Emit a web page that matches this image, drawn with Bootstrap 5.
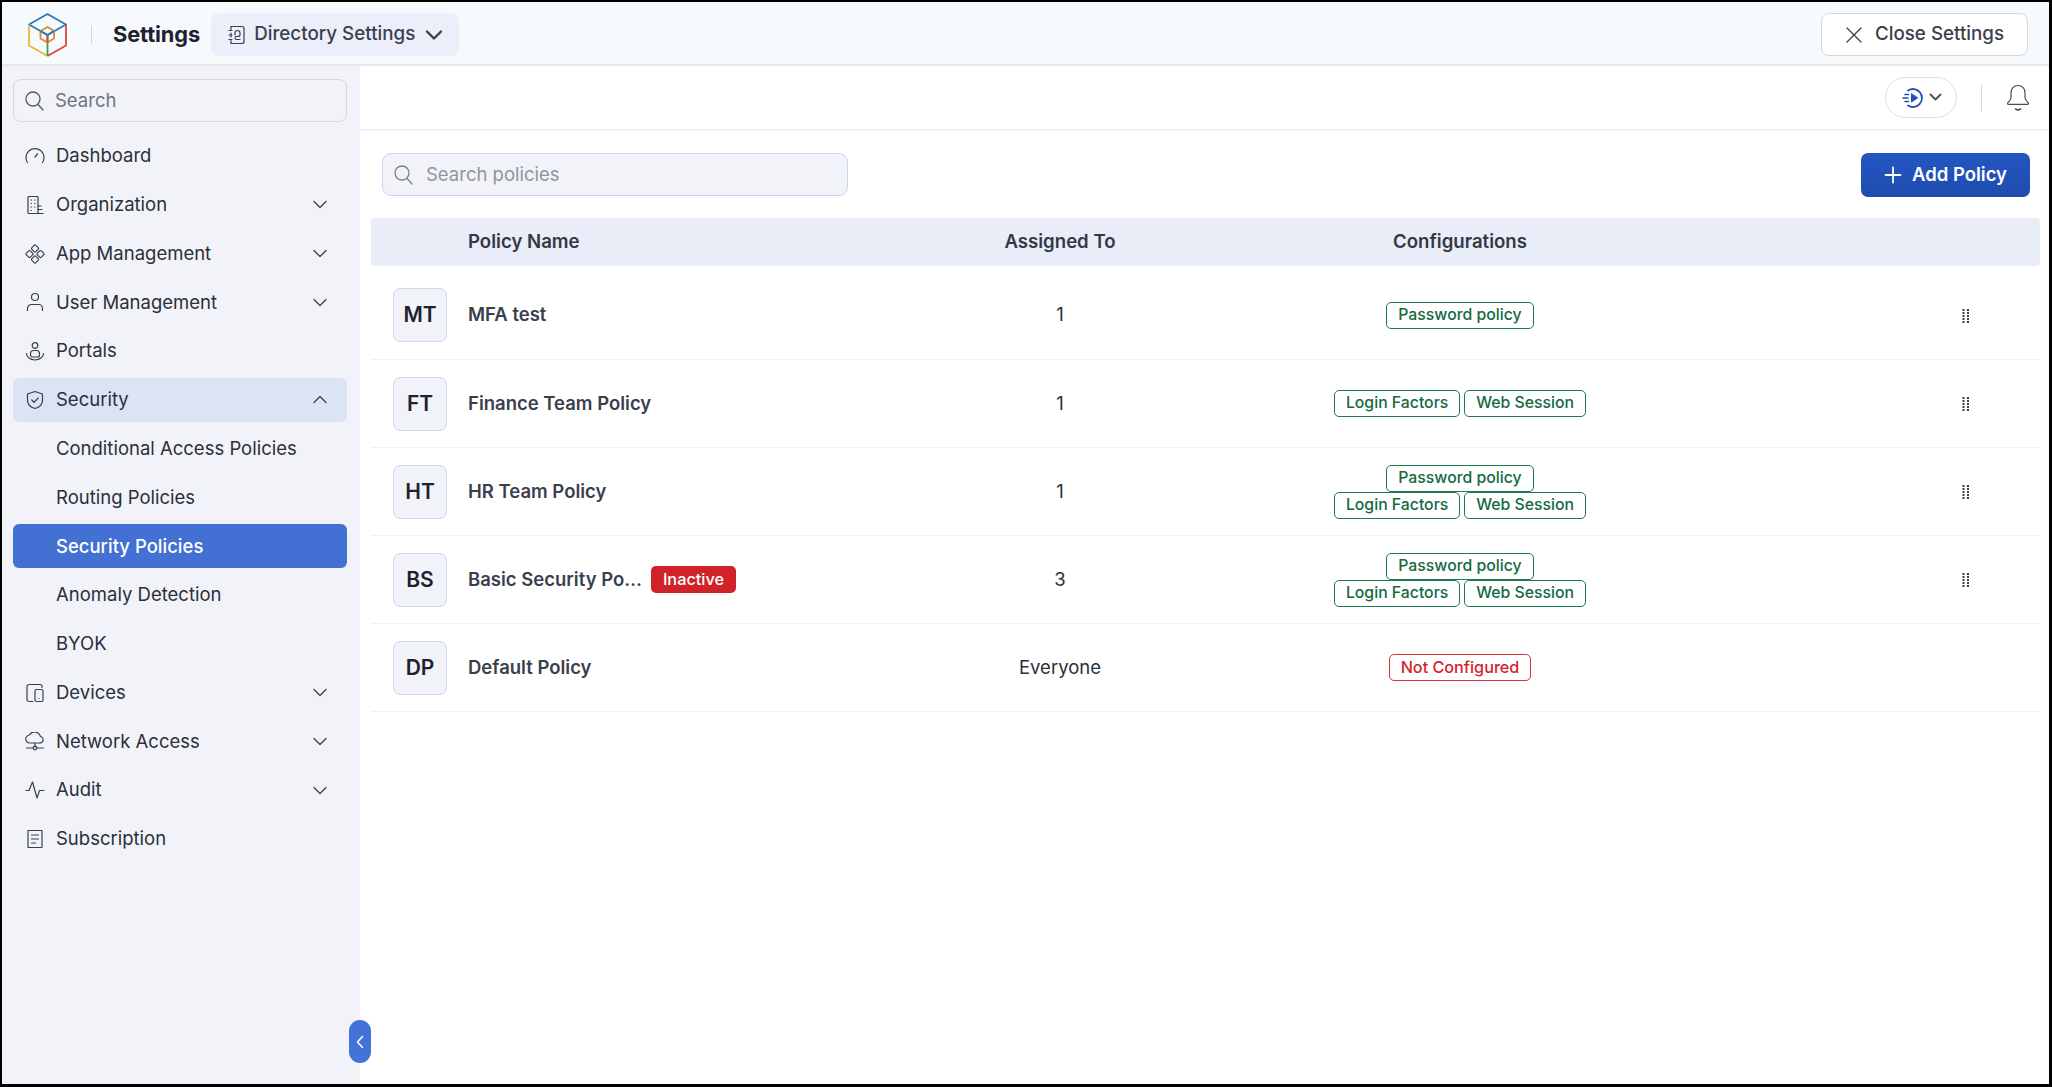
<!DOCTYPE html>
<html lang="en">
  <head>
    <meta charset="UTF-8" />
    <meta name="viewport" content="width=device-width, initial-scale=1.0" />
    <title>Security Policies</title>
    <link href="https://cdn.jsdelivr.net/npm/bootstrap@5.3.2/dist/css/bootstrap.min.css" rel="stylesheet" />
    <style>
      html, body { height: 100%; }
      body {
        font-family: Inter, "Noto Sans", sans-serif;
        color: #2b2f3a;
        background: #fff;
        overflow: hidden;
      }
      svg { flex: none; display: block; }
      .app-shell {
        position: relative;
        width: 2052px;
        height: 1087px;
        border: solid #000;
        border-width: 2px 3px 3px 2px;
        display: flex;
        flex-direction: column;
      }
      /* header */
      .top-head {
        height: 64px;
        flex: none;
        background: #f7fafd;
        border-bottom: 2px solid #e6e8ec;
        padding: 11px 21px 0 26px;
      }
      .head-rule { width: 1px; height: 18px; background: #d5d7dc; margin: 0 21px 0 24px; }
      .head-title { font-size: 21.8px; font-weight: 700; color: #1e2230; letter-spacing: -.1px; }
      .dir-pill {
        height: 43px;
        width: 248px;
        margin-left: 11px;
        background: #eceff9;
        border-radius: 8px;
        padding-left: 16px;
        font-size: 18.8px;
        font-weight: 500;
        color: #3a3f4d;
      }
      .dir-pill .dir-chev { margin-left: 10px; }
      .close-btn {
        height: 43px;
        width: 207px;
        background: #fff;
        border: 1px solid #d5d7dc;
        border-radius: 8px;
        font-size: 18.8px;
        font-weight: 500;
        color: #3a3f4d;
      }
      /* sidebar */
      .side-col {
        width: 358px;
        flex: none;
        background: #f1f3f9;
        padding: 13px 13px 0 11px;
      }
      .side-search {
        height: 43px;
        background: #f1f3f9;
        border: 1.5px solid #d6d8de;
        border-radius: 8px;
        padding-left: 11px;
        margin-bottom: 12px;
      }
      .side-search input, .pol-search input {
        border: 0;
        outline: 0;
        background: transparent;
        font-size: 18.5px;
        width: 100%;
        padding: 0;
        margin-left: 11px;
      }
      .side-search input::placeholder { color: #6d7280; opacity: 1; }
      .pol-search input::placeholder { color: #8f94a1; opacity: 1; }
      .side-menu { display: flex; flex-direction: column; gap: 4.8px; }
      .side-item {
        height: 44px;
        display: flex;
        align-items: center;
        gap: 11px;
        padding: 0 20px 0 12px;
        border-radius: 6px;
        font-size: 18.5px;
        color: #2b2f3a;
        text-decoration: none;
      }
      .side-item.sub { padding-left: 43px; }
      .side-item.open { background: #dbe3f4; }
      .side-item.current { background: #4270d3; color: #fff; font-weight: 500; }
      .side-item .chev { margin-left: auto; }
      /* main */
      .util-bar {
        height: 65px;
        flex: none;
        border-bottom: 2px solid #f0f1f4;
        padding-right: 19px;
      }
      .play-pill {
        width: 72px;
        height: 41px;
        border: 1px solid #dcdee3;
        border-radius: 21px;
      }
      .util-rule { width: 1px; height: 27px; background: #d5d7dc; margin: 0 24px 0 24px; }
      .tool-row { padding: 22px 19px 0 22px; height: 87px; flex: none; }
      .pol-search {
        width: 466px;
        height: 43px;
        background: #f1f3f9;
        border: 1.5px solid #c9d4ee;
        border-radius: 9px;
        padding-left: 11px;
      }
      .pol-search input { margin-left: 13px; }
      .add-btn {
        width: 169px;
        height: 44px;
        border: 0;
        border-radius: 7px;
        background: linear-gradient(#2456c2, #1f4cae);
        color: #fff;
        font-size: 18.5px;
        font-weight: 600;
        padding: 0;
      }
      .add-btn svg { margin-right: 10px; }
      .pol-table {
        width: 1669px;
        margin-left: 11px;
        table-layout: fixed;
        border-collapse: separate;
        border-spacing: 0;
      }
      .pol-table th {
        height: 48px;
        background: #e9edf8;
        font-size: 18.6px;
        font-weight: 600;
        color: #343846;
        padding: 0;
        vertical-align: middle;
      }
      .pol-table th:first-child { border-radius: 4px 0 0 4px; }
      .pol-table th:last-child { border-radius: 0 4px 4px 0; }
      .pol-table td {
        height: 88px;
        padding: 0;
        border-bottom: 1.5px solid #eef0f3;
        vertical-align: middle;
        font-size: 18.5px;
      }
      .row-first td { height: 94px; padding-top: 5px; }
      .avatar-box {
        width: 54px;
        height: 54px;
        margin-left: 22px;
        background: #f1f3f9;
        border: 1.5px solid #cdd8f0;
        border-radius: 7px;
        font-size: 21px;
        font-weight: 600;
        color: #1e2230;
      }
      .pol-name { font-weight: 600; color: #3a3f4d; }
      .state-tag {
        background: #cf2229;
        color: #fff;
        font-size: 16.3px;
        font-weight: 500;
        height: 27px;
        line-height: 27px;
        padding: 0 12px;
        border-radius: 5px;
        margin-left: 9px;
      }
      .tag-wrap { display: flex; flex-wrap: wrap; justify-content: center; column-gap: 4px; }
      .cfg-tag {
        height: 27px;
        line-height: 24px;
        padding: 0 11px;
        border: 1.5px solid #1e7a4f;
        border-radius: 5px;
        font-size: 15.8px;
        font-weight: 500;
        color: #14693f;
        white-space: nowrap;
      }
      .cfg-tag.none { border-color: #d3343b; color: #d3242c; font-size: 16.2px; }
      .line-break { flex-basis: 100%; height: 0; }
      .grip { margin-left: 302px; }
      .collapse-tab {
        position: absolute;
        left: 347px;
        top: 1018px;
        width: 22px;
        height: 43px;
        background: #4472d6;
        border-radius: 11px;
      }
    </style>
  </head>
  <body>
    <div class="app-shell">
      <!-- Header -->
      <header class="top-head d-flex align-items-start">
        <div class="d-flex align-items-center" style="height:43px">
          <svg width="39" height="44" viewBox="0 0 39 44" fill="none" stroke-width="1.8" stroke-linejoin="round">
            <path d="M19.5 1 38 11.5 19.5 22 1 11.5Z" stroke="#2a78b5" />
            <path d="M1 11.5V32.5L19.5 43" stroke="#eeb53a" />
            <path d="M38 11.5V32.5L19.5 43" stroke="#d9453d" />
            <path d="M19.5 22V43" stroke="#3c9a57" />
            <path d="M19.5 14 26 18V25.5L19.5 29.5 12.5 25.5V18Z" stroke="#d98a35" />
            <path d="M12.5 18 19.5 22 26 18" stroke="#2a78b5" />
            <path d="M19.5 22V29.5" stroke="#d9453d" />
          </svg>
          <span class="head-rule"></span>
          <span class="head-title">Settings</span>
        </div>
        <div class="dir-pill d-flex align-items-center">
          <svg width="19" height="20" viewBox="0 0 19 20" fill="none" stroke="#3a3f4d" stroke-width="1.2" stroke-linecap="round">
            <path d="M4 1.5h11a2 2 0 0 1 2 2v13a2 2 0 0 1-2 2H4" />
            <path d="M4 1.5v3M4 8v4M4 15.5v3M2 5.5h3M2 10h3M2 14.5h3" />
            <path d="M8 10V8a2.5 2.5 0 0 1 5 0v1.5a2 2 0 0 1-2 2H9.5a1.5 1.5 0 0 0 0 3H13" />
          </svg>
          <span class="ms-2">Directory Settings</span>
          <svg class="dir-chev" width="18" height="12" viewBox="0 0 18 12" fill="none" stroke="#3a3f4d" stroke-width="2.4" stroke-linecap="round" stroke-linejoin="round"><path d="M2 2.5l7 7 7-7" /></svg>
        </div>
        <button class="close-btn d-flex align-items-center justify-content-center ms-auto" type="button">
          <svg class="me-2" width="18" height="18" viewBox="0 0 18 18" fill="none" stroke="#3a3f4d" stroke-width="1.3" stroke-linecap="round"><path d="M2 2l14 14M16 2 2 16" /></svg>
          <span class="ms-1">Close Settings</span>
        </button>
      </header>

      <div class="d-flex flex-grow-1" style="min-height:0">
        <!-- Sidebar -->
        <aside class="side-col">
          <div class="side-search d-flex align-items-center">
            <svg width="19" height="20" viewBox="0 0 19 20" fill="none" stroke="#555a68" stroke-width="1.3" stroke-linecap="round"><circle cx="8" cy="8" r="7" /><path d="M13 13.5l5 5.5" /></svg>
            <input type="text" placeholder="Search" aria-label="Search" />
          </div>
          <nav class="side-menu" id="sideMenu"></nav>
        </aside>

        <!-- Main -->
        <main class="flex-grow-1 d-flex flex-column" style="min-width:0">
          <div class="util-bar d-flex align-items-center justify-content-end">
            <div class="play-pill d-flex align-items-center justify-content-center gap-1">
              <svg width="24" height="22" viewBox="0 0 24 22" fill="none" stroke="#2150b8" stroke-width="1.8" stroke-linecap="round">
                <path d="M7 3.5A9 9 0 1 1 7 18.5" />
                <path d="M10.5 7v8l6-4Z" fill="#2150b8" stroke-width="1" stroke-linejoin="round" />
                <path d="M4 7.5h3.5M2 11h5M4 14.5h3.5" stroke-width="1.6" />
              </svg>
              <svg width="13" height="9" viewBox="0 0 13 9" fill="none" stroke="#4a4f5c" stroke-width="1.9" stroke-linecap="round" stroke-linejoin="round"><path d="M1.5 1.5l5 5 5-5" /></svg>
            </div>
            <span class="util-rule"></span>
            <svg width="24" height="28" viewBox="0 0 24 28" fill="none" stroke="#4a4f5c" stroke-width="1.2" stroke-linecap="round" stroke-linejoin="round">
              <path d="M12 1.5c-4.4 0-7 3.3-7 7.3v4.4c0 2.2-1.3 4-3.2 5.6-.6.6-.2 1.5.6 1.5h19.2c.8 0 1.2-.9.6-1.5-1.9-1.6-3.2-3.4-3.2-5.6V8.8c0-4-2.6-7.3-7-7.3Z" />
              <path d="M9.5 25c1.5 1 3.5 1 5 0" stroke-width="1.6" />
            </svg>
          </div>

          <div class="tool-row d-flex justify-content-between align-items-start">
            <div class="pol-search d-flex align-items-center">
              <svg width="19" height="20" viewBox="0 0 19 20" fill="none" stroke="#7c8190" stroke-width="1.3" stroke-linecap="round"><circle cx="8" cy="8" r="7" /><path d="M13 13.5l5 5.5" /></svg>
              <input type="text" placeholder="Search policies" aria-label="Search policies" />
            </div>
            <button class="add-btn d-flex align-items-center justify-content-center" type="button">
              <svg width="18" height="18" viewBox="0 0 18 18" fill="none" stroke="#fff" stroke-width="1.8" stroke-linecap="round"><path d="M9 1.5v15M1.5 9h15" /></svg>
              <span>Add Policy</span>
            </button>
          </div>

          <table class="pol-table">
            <colgroup>
              <col style="width:97px" />
              <col style="width:392px" />
              <col style="width:400px" />
              <col style="width:400px" />
              <col />
            </colgroup>
            <thead>
              <tr>
                <th></th>
                <th>Policy Name</th>
                <th class="text-center">Assigned To</th>
                <th class="text-center">Configurations</th>
                <th></th>
              </tr>
            </thead>
            <tbody id="policyRows"></tbody>
          </table>
        </main>
      </div>

      <!-- Sidebar collapse handle -->
      <div class="collapse-tab d-flex align-items-center justify-content-center">
        <svg width="8" height="14" viewBox="0 0 8 14" fill="none" stroke="#fff" stroke-width="1.5" stroke-linecap="round" stroke-linejoin="round"><path d="M6.5 1.5 1.5 7l5 5.5" /></svg>
      </div>
    </div>

    <script>
      const stroke = 'fill="none" stroke="#3a3f4d" stroke-width="1.2" stroke-linecap="round" stroke-linejoin="round"';
      const icon = (d) => `<svg width="20" height="20" viewBox="0 0 20 20" ${stroke}>${d}</svg>`;
      const icons = {
        dashboard: '<path d="M2.5 16.5a9 9 0 1 1 15 0" /><path d="M10 11l2.5-3" />',
        org: '<path d="M13 18.5V2.5a1 1 0 0 0-1-1H4a1 1 0 0 0-1 1v15a1 1 0 0 0 1 1Z" /><path d="M6 5h.5M9.5 5h.5M6 8.5h.5M9.5 8.5h.5M6 12h.5M9.5 12h.5M6 15.5h.5M13 11h3M13 14.5h4M13 18.5h5" />',
        app: '<rect x="7.2" y="1.7" width="5.6" height="5.6" rx="1.2" transform="rotate(45 10 4.5)" /><rect x="7.2" y="12.7" width="5.6" height="5.6" rx="1.2" transform="rotate(45 10 15.5)" /><rect x="1.7" y="7.2" width="5.6" height="5.6" rx="1.2" transform="rotate(45 4.5 10)" /><rect x="12.7" y="7.2" width="5.6" height="5.6" rx="1.2" transform="rotate(45 15.5 10)" />',
        user: '<circle cx="10" cy="5" r="3.5" /><path d="M2.5 18.5v-2a4 4 0 0 1 4-4h7a4 4 0 0 1 4 4v2" />',
        portals: '<circle cx="10" cy="4.5" r="2.8" /><path d="M5.5 14v-1.5a3 3 0 0 1 3-3h3a3 3 0 0 1 3 3V14a2 2 0 0 1-2 2h-5a2 2 0 0 1-2-2Z" /><path d="M1.5 12.5a8.5 6.5 0 0 0 17 0" />',
        security: '<path d="M10 1.5l7.5 2.5v6c0 4.5-3.2 7.3-7.5 8.5-4.3-1.2-7.5-4-7.5-8.5V4Z" /><path d="M6.8 10l2.3 2.3 4-4.3" />',
        devices: '<path d="M8 18.5H4a2 2 0 0 1-2-2v-13a2 2 0 0 1 2-2h11a2 2 0 0 1 2 2v1" /><rect x="10" y="6.5" width="8" height="12" rx="1.5" /><path d="M14 15.5h.1" />',
        network: '<path d="M5.5 12.5a4 4 0 0 1-.5-8 6 6 0 0 1 11 1.5 3.3 3.3 0 0 1-1.5 6.5Z" transform="translate(-.5 -1.5)" /><path d="M10 11v4M1.5 16h6.5M12 16h6.5" /><circle cx="10" cy="16" r="1.8" />',
        audit: '<path d="M1 10.5h3L7.5 2l4.500 16 2.500-7.500H19" />',
        subscription: '<path d="M3 1.5h14v17H3Z" stroke-dasharray="2 .4" /><path d="M6.5 6h7M6.5 10h7M6.5 14h4" />',
      };
      const chevDown = '<svg class="chev" width="14" height="9" viewBox="0 0 14 9" fill="none" stroke="#3a3f4d" stroke-width="1.3" stroke-linecap="round" stroke-linejoin="round"><path d="M1 1.5l6 6 6-6" /></svg>';
      const chevUp = '<svg class="chev" width="14" height="9" viewBox="0 0 14 9" fill="none" stroke="#3a3f4d" stroke-width="1.3" stroke-linecap="round" stroke-linejoin="round"><path d="M1 7.5l6-6 6 6" /></svg>';

      const menu = [
        { name: "Dashboard", icon: "dashboard" },
        { name: "Organization", icon: "org", chev: chevDown },
        { name: "App Management", icon: "app", chev: chevDown },
        { name: "User Management", icon: "user", chev: chevDown },
        { name: "Portals", icon: "portals" },
        { name: "Security", icon: "security", chev: chevUp, cls: "open" },
        { name: "Conditional Access Policies", cls: "sub" },
        { name: "Routing Policies", cls: "sub" },
        { name: "Security Policies", cls: "sub current" },
        { name: "Anomaly Detection", cls: "sub" },
        { name: "BYOK", cls: "sub" },
        { name: "Devices", icon: "devices", chev: chevDown },
        { name: "Network Access", icon: "network", chev: chevDown },
        { name: "Audit", icon: "audit", chev: chevDown },
        { name: "Subscription", icon: "subscription" },
      ];

      document.getElementById("sideMenu").innerHTML = menu
        .map((m) => `<a class="side-item ${m.cls || ""}" href="#">${m.icon ? icon(icons[m.icon]) : ""}<span>${m.name}</span>${m.chev || ""}</a>`)
        .join("");

      const policies = [
        { initials: "MT", name: "MFA test", assigned: "1", tags: [["Password policy"]], grip: true },
        { initials: "FT", name: "Finance Team Policy", assigned: "1", tags: [["Login Factors", "Web Session"]], grip: true },
        { initials: "HT", name: "HR Team Policy", assigned: "1", tags: [["Password policy"], ["Login Factors", "Web Session"]], grip: true },
        { initials: "BS", name: "Basic Security Po…", inactive: true, assigned: "3", tags: [["Password policy"], ["Login Factors", "Web Session"]], grip: true },
        { initials: "DP", name: "Default Policy", assigned: "Everyone", none: true },
      ];

      const grip = '<svg class="grip" width="8" height="15" viewBox="0 0 8 15" fill="#3a3f4d">' +
        [1, 4, 7, 10, 13].map((y) => `<rect x="0.5" y="${y}" width="2" height="2" /><rect x="5" y="${y}" width="2" height="2" />`).join("") +
        "</svg>";

      document.getElementById("policyRows").innerHTML = policies
        .map((p, i) => {
          const tags = p.none
            ? '<span class="cfg-tag none">Not Configured</span>'
            : p.tags
                .map((line) => line.map((t) => `<span class="cfg-tag">${t}</span>`).join(""))
                .join('<span class="line-break"></span>');
          return `<tr class="${i === 0 ? "row-first" : ""}">
            <td><div class="avatar-box d-flex align-items-center justify-content-center">${p.initials}</div></td>
            <td><div class="d-flex align-items-center"><span class="pol-name">${p.name}</span>${p.inactive ? '<span class="state-tag">Inactive</span>' : ""}</div></td>
            <td class="text-center">${p.assigned}</td>
            <td><div class="tag-wrap">${tags}</div></td>
            <td>${p.grip ? grip : ""}</td>
          </tr>`;
        })
        .join("");
    </script>
    <script src="https://cdn.jsdelivr.net/npm/bootstrap@5.3.2/dist/js/bootstrap.bundle.min.js"></script>
  </body>
</html>
